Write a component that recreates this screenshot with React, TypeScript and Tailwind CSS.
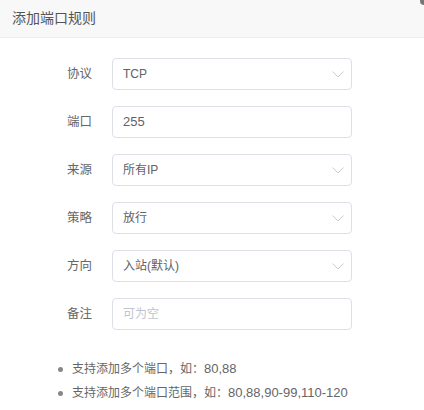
import React from 'react';

const font = { fontFamily: '"Liberation Sans", "Noto Sans CJK SC", sans-serif' };

const Chevron = () => (
  <svg width="12" height="7" viewBox="0 0 12 7" fill="none" className="shrink-0">
    <path d="M0.5 0.5 L6 6 L11.5 0.5" stroke="#c8cbd2" strokeWidth="1" />
  </svg>
);

const Row = ({ label, value, select, placeholder }: { label: string; value?: React.ReactNode; select?: boolean; placeholder?: string }) => (
  <div className="flex items-center h-8">
    <label className="w-[92px] text-right text-[12.5px] text-[#666] whitespace-nowrap">{label}</label>
    <div className="ml-5 w-[240px] h-8 border border-[#dcdfe6] rounded flex items-center pl-[10px] pr-[7px] bg-white">
      {value ? (
        <span className="flex-1 text-[12px] text-[#606266]">{value}</span>
      ) : (
        <span className="flex-1 text-[12px] text-[#c0c4cc]">{placeholder}</span>
      )}
      {select && <Chevron />}
    </div>
  </div>
);

export default function App() {
  return (
    <div className="w-[424px] h-[410px] bg-white relative overflow-hidden" style={font}>
      <div className="h-[38px] bg-[#f8f8f8] border-b border-[#eeeeee] flex items-center pl-3">
        <span className="text-[14px] text-[#555]">添加端口规则</span>
      </div>
      <div className="absolute right-0 top-0 w-[4px] h-[5px] bg-[#777] rounded-bl" />
      <div className="pt-5 flex flex-col gap-4">
        <Row label="协议" value="TCP" select />
        <Row label="端口" value={<span className="text-[13px]">255</span>} />
        <Row label="来源" value="所有IP" select />
        <Row label="策略" value="放行" select />
        <Row label="方向" value="入站(默认)" select />
        <Row label="备注" placeholder="可为空" />
      </div>
      <ul className="mt-[30px] pl-[58px] flex flex-col gap-[6px] text-[12px] text-[#666]">
        <li className="flex items-center h-[18px]">
          <span className="w-[5px] h-[5px] rounded-full bg-[#888] mr-[9px]" />
          支持添加多个端口，如：<span className="text-[13px]">80,88</span>
        </li>
        <li className="flex items-center h-[18px]">
          <span className="w-[5px] h-[5px] rounded-full bg-[#888] mr-[9px]" />
          支持添加多个端口范围，如：<span className="text-[13px]">80,88,90-99,110-120</span>
        </li>
      </ul>
    </div>
  );
}
